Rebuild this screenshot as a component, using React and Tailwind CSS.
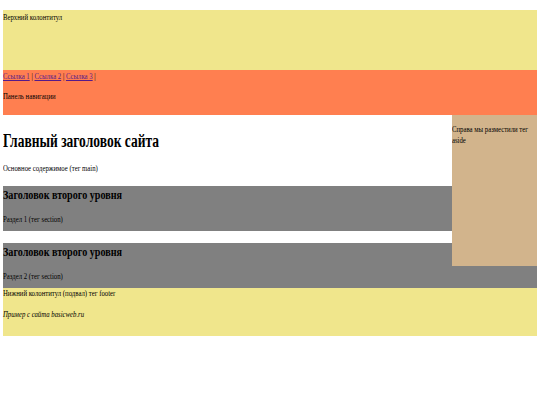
import React from "react";

// narrow rendering of the original page: every text line is squeezed horizontally
const T = ({ children, className = "" }) => (
  <span
    className={`inline-block origin-left scale-x-[0.75] whitespace-nowrap ${className}`}
  >
    {children}
  </span>
);

const Section = ({ n }) => (
  <section className="h-[45px] bg-[#808080] pt-[2px]">
    <h2 className="text-[13.5px] font-bold leading-[14px]">
      <T>Заголовок второго уровня</T>
    </h2>
    <p className="mt-[12px] text-[9px] leading-[10px]">
      <T>Раздел {n} (тег section)</T>
    </p>
  </section>
);

export default function App() {
  return (
    <div className="min-h-[405px] bg-white px-[3px] pt-[10px] font-['Liberation_Serif',serif] text-[9px] text-black">
      {/* header */}
      <header className="h-[60px] bg-[#F0E68C] pt-[2px] leading-[10px]">
        <T>Верхний колонтитул</T>
      </header>

      {/* nav */}
      <nav className="h-[45px] bg-[#FF7F50] pt-[1px]">
        <div className="leading-[10px]">
          <T>
            <a href="#" className="text-[#551A8B] underline">
              Ссылка 1
            </a>{" "}
            |{" "}
            <a href="#" className="text-[#551A8B] underline">
              Ссылка 2
            </a>{" "}
            |{" "}
            <a href="#" className="text-[#551A8B] underline">
              Ссылка 3
            </a>{" "}
            |
          </T>
        </div>
        <p className="mt-[10px] leading-[10px]">
          <T>Панель навигации</T>
        </p>
      </nav>

      {/* main + aside */}
      <div>
        <aside className="float-right h-[151px] w-[85px] bg-[#D2B48C] pt-[9px] leading-[11px]">
          <T>
            Справа мы разместили тег
            <br />
            aside
          </T>
        </aside>
        <main>
          <div className="h-[71px] pt-[16px]">
            <h1 className="text-[18px] font-bold leading-[20px]">
              <T>Главный заголовок сайта</T>
            </h1>
            <p className="mt-[12px] leading-[10px]">
              <T>Основное содержимое (тег main)</T>
            </p>
          </div>
          <Section n={1} />
          <div className="h-[12px]" />
          <Section n={2} />
        </main>
      </div>

      {/* footer */}
      <footer className="clear-both h-[48px] bg-[#F0E68C]">
        <p className="leading-[10px]">
          <T>Нижний колонтитул (подвал) тег footer</T>
        </p>
        <p className="mt-[11px] italic leading-[10px]">
          <T>Пример с сайта basicweb.ru</T>
        </p>
      </footer>
    </div>
  );
}
